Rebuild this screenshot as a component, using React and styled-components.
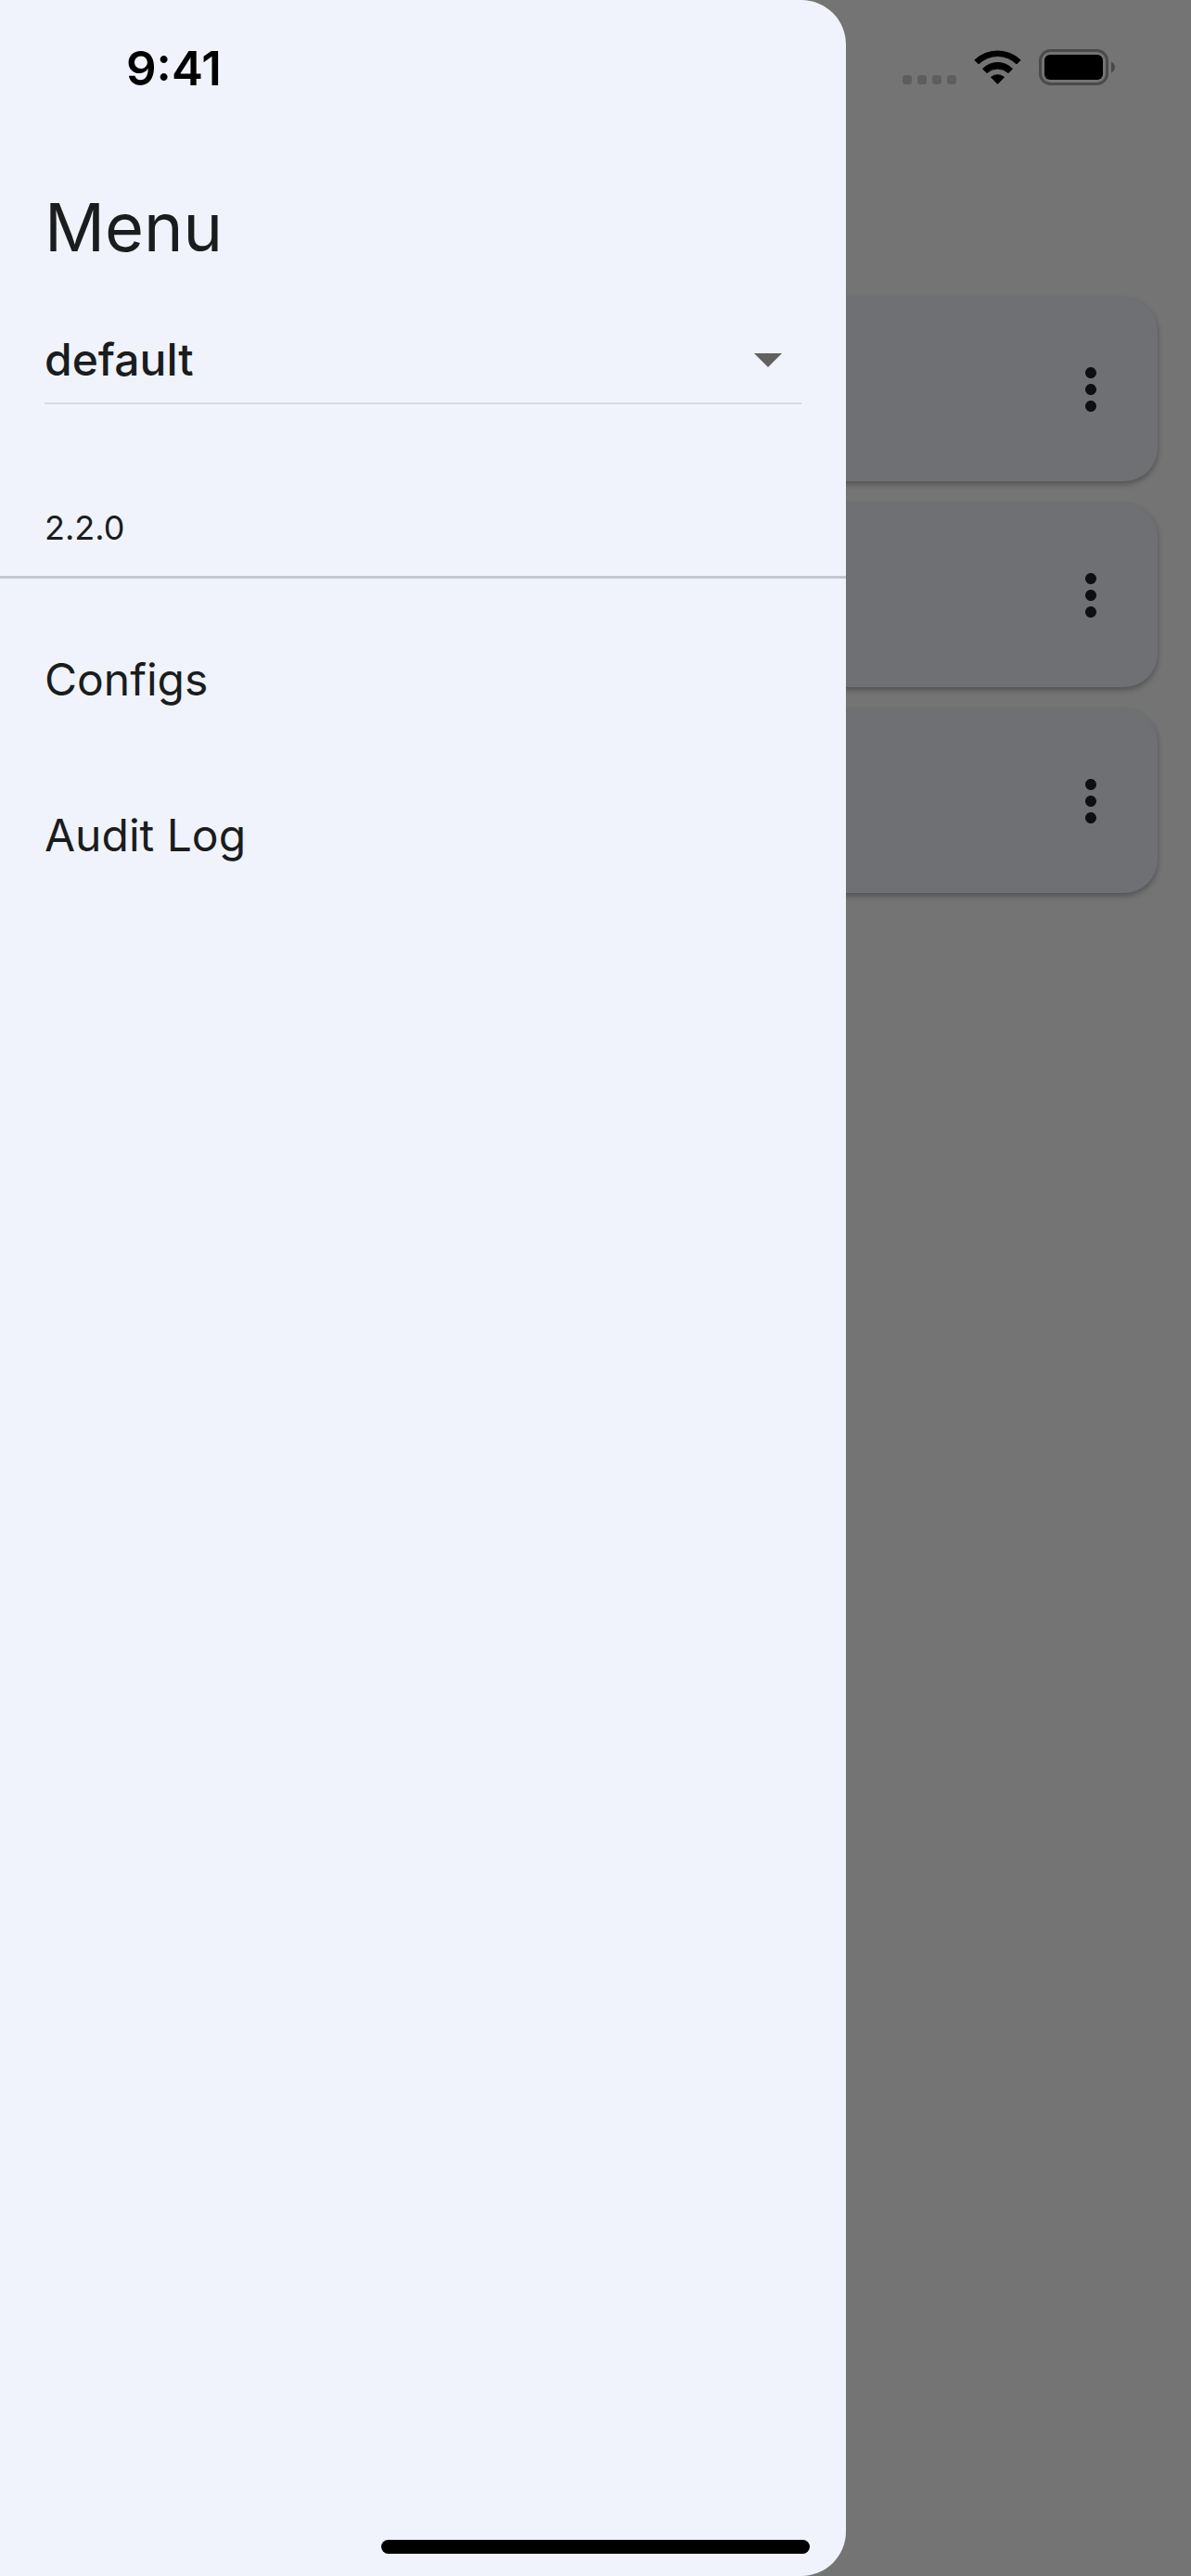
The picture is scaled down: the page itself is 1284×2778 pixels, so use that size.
import React, { useState } from "react";
import styled, { createGlobalStyle } from "styled-components";
import { MdArrowDropDown, MdMoreVert } from "react-icons/md";

const menuItems = [
  { title: "Configs", href: "#configs" },
  { title: "Audit Log", href: "#audit-log" }
];

const entries = [1, 2, 3];

export default function App() {
  const [profile, setProfile] = useState("default");

  return (
    <React.Fragment>
      <GlobalStyle />
      <Screen>
        <CardList>
          {entries.map(entry => (
            <Card key={entry}>
              <MoreButton type="button" aria-label="More options">
                <MdMoreVert />
              </MoreButton>
            </Card>
          ))}
        </CardList>
        <Scrim />
        <Drawer>
          <DrawerHeader>
            <Title>Menu</Title>
            <SelectField>
              <Select
                aria-label="Profile"
                value={profile}
                onChange={e => setProfile(e.target.value)}
              >
                <option value="default">default</option>
              </Select>
              <MdArrowDropDown />
            </SelectField>
            <Version>2.2.0</Version>
          </DrawerHeader>
          <Nav>
            {menuItems.map(item => (
              <NavLink key={item.title} href={item.href}>
                {item.title}
              </NavLink>
            ))}
          </Nav>
        </Drawer>
        <StatusBar>
          <Time>9:41</Time>
          <StatusIcons>
            <SignalIcon />
            <WifiIcon />
            <BatteryIcon />
          </StatusIcons>
        </StatusBar>
        <HomeIndicator />
      </Screen>
    </React.Fragment>
  );
}

const SignalIcon = () => (
  <svg width="58" height="40" viewBox="0 0 58 40" fill="#5e5e5e">
    <rect x="0" y="28" width="10" height="10" rx="3.5" />
    <rect x="16" y="28" width="10" height="10" rx="3.5" />
    <rect x="32" y="28" width="10" height="10" rx="3.5" />
    <rect x="48" y="28" width="10" height="10" rx="3.5" />
  </svg>
);

const WifiIcon = () => (
  <svg
    width="51"
    height="40"
    viewBox="0 -1 51 40"
    fill="#000"
    stroke="#000"
    strokeWidth="1"
    strokeLinejoin="round"
  >
    <path d="M0.8 10.8A36 36 0 0 1 50.2 10.8L46 15A29 29 0 0 0 5 15Z" />
    <path d="M9.5 20.2A22.5 22.5 0 0 1 41.5 20.2L37 24.6A17 17 0 0 0 14 24.6Z" />
    <path d="M18.5 29.2A11 11 0 0 1 32.5 29.2L25.5 36.4Z" />
  </svg>
);

const BatteryIcon = () => (
  <svg width="82" height="40" viewBox="0 0 82 40">
    <rect
      x="1.5"
      y="1.5"
      width="72"
      height="36"
      rx="11"
      fill="none"
      stroke="#4a4a4a"
      strokeWidth="3"
    />
    <rect x="6" y="6" width="63" height="27" rx="6" fill="#000" />
    <path d="M78 13.5C80.5 14.5 82 17 82 19.5C82 22 80.5 24.5 78 25.5Z" fill="#4a4a4a" />
  </svg>
);

const GlobalStyle = createGlobalStyle`
  * {
    box-sizing: border-box;
  }
  body {
    margin: 0;
    background-color: #fcfcfc;
    color: #1a1c1e;
    font-family: Inter, Roboto, sans-serif;
  }
`;

const Screen = styled.div`
  position: relative;
  display: flex;
  min-height: 100vh;
`;

const CardList = styled.main`
  position: absolute;
  inset: 0;
  display: flex;
  flex-direction: column;
  gap: 24px;
  padding: 321px 36px 0;
`;

const Card = styled.article`
  display: flex;
  align-items: center;
  justify-content: flex-end;
  height: 198px;
  padding: 0 36px;
  border-radius: 36px;
  background-color: #f1f3fc;
  box-shadow: 0 3px 6px rgba(0, 0, 0, 0.3);
`;

const MoreButton = styled.button`
  display: flex;
  padding: 0;
  border: none;
  background: none;
  color: #212121;
  font-size: 72px;
`;

const Scrim = styled.div`
  position: absolute;
  inset: 0;
  background-color: rgba(0, 0, 0, 0.54);
`;

const Drawer = styled.aside`
  position: relative;
  width: 71%;
  border-radius: 0 48px 48px 0;
  background-color: #f0f3fb;
`;

const DrawerHeader = styled.header`
  padding: 197px 48px 28px;
  border-bottom: 3px solid #c3c7cf;
`;

const Title = styled.h1`
  margin: 0 0 58px;
  font-size: 72px;
  font-weight: 400;
  line-height: 96px;
`;

const SelectField = styled.div`
  display: grid;
  align-items: center;
  margin-bottom: 109px;
  padding-bottom: 11px;
  border-bottom: 2px solid #d9dade;

  & > * {
    grid-area: 1 / 1;
  }
  svg {
    justify-self: end;
    color: #616161;
    font-size: 72px;
    pointer-events: none;
  }
`;

const Select = styled.select`
  width: 100%;
  height: 72px;
  padding: 0;
  border: none;
  appearance: none;
  background: none;
  color: inherit;
  font-family: inherit;
  font-size: 48px;
  font-weight: 500;
`;

const Version = styled.p`
  margin: 0;
  font-size: 36px;
  line-height: 48px;
`;

const Nav = styled.nav`
  display: flex;
  flex-direction: column;
  padding-top: 25px;
`;

const NavLink = styled.a`
  padding: 0 48px;
  color: inherit;
  font-size: 48px;
  line-height: 168px;
  text-decoration: none;
`;

const StatusBar = styled.div`
  position: absolute;
  top: 0;
  left: 0;
  right: 0;
  display: flex;
  align-items: center;
  justify-content: space-between;
  height: 146px;
  padding: 0 82px 0 136px;
  color: #000;
`;

const Time = styled.time`
  font-size: 51px;
  font-weight: 600;
`;

const StatusIcons = styled.div`
  display: flex;
  gap: 19px;
`;

const HomeIndicator = styled.div`
  position: absolute;
  bottom: 24px;
  left: 32%;
  right: 32%;
  height: 15px;
  border-radius: 8px;
  background-color: #000;
`;
